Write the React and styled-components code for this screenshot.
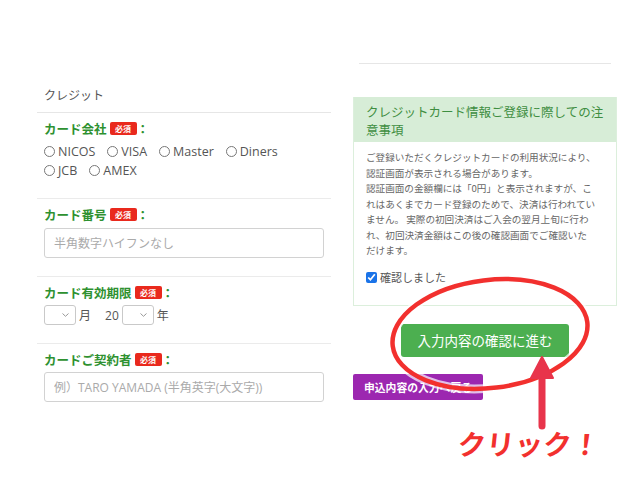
import React from "react";
import styled, { createGlobalStyle } from "styled-components";

const GlobalStyle = createGlobalStyle`
  html, body {
    margin: 0;
    padding: 0;
    background: #ffffff;
  }
  body {
    font-family: "Open Sans", "Noto Sans CJK JP", sans-serif;
    color: #444;
  }
`;

const Screen = styled.div`
  position: relative;
  width: 640px;
  height: 480px;
  overflow: hidden;
  background: #fff;
`;

const Page = styled.div`
  display: flex;
  align-items: flex-start;
  padding-left: 37px;
`;

const LeftCol = styled.div`
  width: 294px;
  display: flex;
  flex-direction: column;
`;

const TypeRow = styled.div`
  margin-top: 86px;
  padding: 0 7px 6px;
  font-size: 12px;
  line-height: 20px;
  color: #555;
  border-bottom: 1px solid #e6e6e6;
`;

const Section = styled.div`
  padding: 5px 7px 18px;
  border-bottom: ${(p) => (p.$last ? "none" : "1px solid #ebebeb")};
`;

const Label = styled.div`
  display: flex;
  align-items: center;
  height: 20px;
  font-size: 12.5px;
  font-weight: 700;
  color: #2e9130;
  font-family: "Noto Sans CJK JP", sans-serif;
`;

const Badge = styled.span`
  display: inline-flex;
  align-items: center;
  justify-content: center;
  width: 27px;
  height: 13px;
  margin-left: 3px;
  border-radius: 2px;
  background: #e9291d;
  color: #fff;
  font-size: 8px;
  font-weight: 700;
`;

const RadioGroup = styled.div`
  margin-top: 4px;
  display: flex;
  flex-wrap: wrap;
  column-gap: 12px;
  width: 260px;
`;

const RadioItem = styled.label`
  display: flex;
  align-items: center;
  height: 19px;
  font-size: 12.5px;
  color: #555;
`;

const Radio = styled.span`
  width: 11px;
  height: 11px;
  box-sizing: border-box;
  border: 1px solid #777;
  border-radius: 50%;
  margin-right: 3px;
`;

const TextInput = styled.input`
  display: block;
  box-sizing: border-box;
  width: 280px;
  height: 30px;
  margin-top: ${(p) => p.$gap || 4}px;
  padding: 0 9px;
  border: 1px solid #d2d2d2;
  border-radius: 3px;
  font-family: "Open Sans", "Noto Sans CJK JP", sans-serif;
  font-size: 12px;
  outline: none;
  &::placeholder {
    color: #aaa;
  }
`;

const DateRow = styled.div`
  margin-top: 3px;
  display: flex;
  align-items: center;
  font-size: 12px;
  color: #555;
`;

const SelectBox = styled.span`
  position: relative;
  display: inline-block;
  box-sizing: border-box;
  width: 32px;
  height: 20px;
  border: 1px solid #c9c9c9;
  border-radius: 3px;
  margin-right: 3px;
  svg {
    position: absolute;
    right: 6px;
    top: 7px;
  }
`;

const Unit = styled.span`
  margin-right: ${(p) => p.$gap || 0}px;
`;

const RightCol = styled.div`
  width: 264px;
  margin-left: 22px;
  display: flex;
  flex-direction: column;
`;

const TopLine = styled.div`
  margin: 63px 6px 0;
  height: 1px;
  background: #e6e6e6;
`;

const Panel = styled.div`
  margin-top: 33px;
  border: 1px solid #dcefdc;
  border-top: none;
`;

const PanelHead = styled.div`
  background: #d7edd7;
  color: #3e8e41;
  font-family: "Noto Sans CJK JP", sans-serif;
  font-size: 12.5px;
  line-height: 18px;
  padding: 6px 12px 3px;
`;

const PanelBody = styled.div`
  padding: 8px 12px 19px;
  font-family: "Noto Sans CJK JP", sans-serif;
  color: #666;
`;

const Notice = styled.p`
  margin: 0;
  font-size: 9.6px;
  line-height: 15.5px;
  white-space: nowrap;
`;

const CheckRow = styled.label`
  display: flex;
  align-items: center;
  margin-top: 10px;
  height: 17px;
  font-size: 11px;
  color: #555;
  input {
    width: 11px;
    height: 11px;
    margin: 0 3px 0 0;
    accent-color: #1a73e8;
  }
`;

const Actions = styled.div`
  display: flex;
  flex-direction: column;
`;

const NextButton = styled.button`
  align-self: center;
  margin-top: 18px;
  width: 168px;
  height: 33px;
  border: none;
  border-radius: 3px;
  background: #4caf50;
  color: #fff;
  font-family: "Noto Sans CJK JP", sans-serif;
  font-size: 13.5px;
`;

const BackButton = styled.button`
  align-self: flex-start;
  margin-top: 17px;
  width: 130px;
  height: 26px;
  border: none;
  border-radius: 2px;
  background: #9c27b0;
  color: #fff;
  font-family: "Noto Sans CJK JP", sans-serif;
  font-size: 10.8px;
  font-weight: 700;
  padding: 0;
`;

const Overlay = styled.svg`
  position: absolute;
  left: 0;
  top: 0;
  pointer-events: none;
`;

const ClickText = styled.div`
  position: absolute;
  left: 458px;
  top: 429px;
  font-family: "Noto Sans CJK JP", sans-serif;
  font-weight: 700;
  font-size: 28px;
  line-height: 1;
  color: #f2302e;
  letter-spacing: 0.5px;
  transform: skewX(-6deg);
`;

const Chevron = () => (
  <svg width="7" height="4" viewBox="0 0 7 4">
    <path d="M0.5 0.5 L3.5 3.3 L6.5 0.5" fill="none" stroke="#999" strokeWidth="1" />
  </svg>
);

const brands = ["NICOS", "VISA", "Master", "Diners", "JCB", "AMEX"];

const noticeLines = [
  "ご登録いただくクレジットカードの利用状況により、",
  "認証画面が表示される場合があります。",
  "認証画面の金額欄には「0円」と表示されますが、こ",
  "れはあくまでカード登録のためで、決済は行われてい",
  "ません。 実際の初回決済はご入会の翌月上旬に行わ",
  "れ、初回決済金額はこの後の確認画面でご確認いた",
  "だけます。",
];

function FieldLabel({ children }) {
  return (
    <Label>
      {children}
      <Badge>必須</Badge>：
    </Label>
  );
}

export default function App() {
  return (
    <Screen>
      <GlobalStyle />
      <Page>
        <LeftCol>
          <TypeRow>クレジット</TypeRow>
          <Section>
            <FieldLabel>カード会社</FieldLabel>
            <RadioGroup>
              {brands.map((b) => (
                <RadioItem key={b}>
                  <Radio />
                  {b}
                </RadioItem>
              ))}
            </RadioGroup>
          </Section>
          <Section>
            <FieldLabel>カード番号</FieldLabel>
            <TextInput placeholder="半角数字ハイフンなし" />
          </Section>
          <Section>
            <FieldLabel>カード有効期限</FieldLabel>
            <DateRow>
              <SelectBox>
                <Chevron />
              </SelectBox>
              <Unit $gap={14}>月</Unit>
              <Unit $gap={3}>20</Unit>
              <SelectBox>
                <Chevron />
              </SelectBox>
              <Unit>年</Unit>
            </DateRow>
          </Section>
          <Section $last>
            <FieldLabel>カードご契約者</FieldLabel>
            <TextInput $gap={3} placeholder="例）TARO YAMADA (半角英字(大文字))" />
          </Section>
        </LeftCol>
        <RightCol>
          <TopLine />
          <Panel>
            <PanelHead>
              クレジットカード情報ご登録に際しての注
              <br />
              意事項
            </PanelHead>
            <PanelBody>
              <Notice>
                {noticeLines.map((l, i) => (
                  <React.Fragment key={i}>
                    {l}
                    {i < noticeLines.length - 1 && <br />}
                  </React.Fragment>
                ))}
              </Notice>
              <CheckRow>
                <input type="checkbox" checked readOnly />
                確認しました
              </CheckRow>
            </PanelBody>
          </Panel>
          <Actions>
            <NextButton>入力内容の確認に進む</NextButton>
            <BackButton>申込内容の入力へ戻る</BackButton>
          </Actions>
        </RightCol>
      </Page>
      <Overlay width="640" height="480" viewBox="0 0 640 480">
        <ellipse cx="490" cy="334" rx="98" ry="54" transform="rotate(-7 490 334)" fill="none" stroke="#ffffff" strokeWidth="9" opacity="0.7" />
        <ellipse cx="490" cy="334" rx="98" ry="54" transform="rotate(-7 490 334)" fill="none" stroke="#f2302e" strokeWidth="4.5" />
        <line x1="542" y1="426" x2="542" y2="372" stroke="#e8344b" strokeWidth="7" strokeLinecap="round" />
        <polygon points="542,357 531,378 553,378" fill="#e8344b" stroke="#e8344b" strokeWidth="2" strokeLinejoin="round" />
      </Overlay>
      <ClickText>クリック！</ClickText>
    </Screen>
  );
}
